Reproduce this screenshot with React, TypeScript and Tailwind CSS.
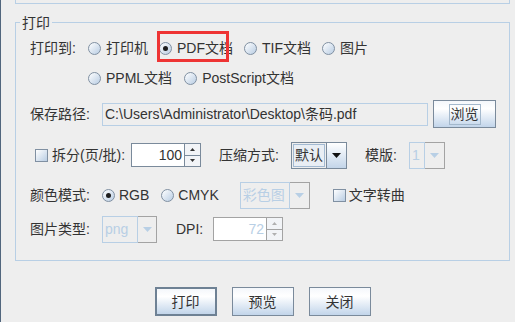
import React from "react";

function Radio({ checked }: { checked?: boolean }) {
  return (
    <span className="flex h-[13px] w-[13px] shrink-0 items-center justify-center rounded-full border border-[#8090a2] bg-linear-to-br from-white to-[#b9cde3]">
      {checked && <span className="h-[5px] w-[5px] rounded-full bg-[#1e1e1e]" />}
    </span>
  );
}

function Check() {
  return (
    <span className="h-[13px] w-[13px] shrink-0 border border-[#8090a2] bg-linear-to-br from-white to-[#b9cde3]" />
  );
}

function Option({ label, checked, gap = "gap-[5px]" }: { label: string; checked?: boolean; gap?: string }) {
  return (
    <span className={`flex items-center ${gap}`}>
      <Radio checked={checked} />
      <span>{label}</span>
    </span>
  );
}

function Triangle({ color }: { color: string }) {
  return (
    <svg width="9" height="5" viewBox="0 0 9 5">
      <path d="M0 0h9L4.5 5z" fill={color} />
    </svg>
  );
}

function Combo({ text, width, arrow = 20, disabled }: { text: string; width: string; arrow?: number; disabled?: boolean }) {
  if (disabled) {
    return (
      <div className={`flex h-[27px] ${width}`}>
        <div className="flex flex-1 items-center border border-[#b8cfe5] pl-[2px] text-[#b8cfe5]">{text}</div>
        <div
          className="flex items-center justify-center border border-l-0 border-[#a3a3a3]"
          style={{ width: arrow }}
        >
          <Triangle color="#b8cfe5" />
        </div>
      </div>
    );
  }
  return (
    <div className={`flex h-[27px] border border-[#7a8a9b] ${width}`}>
      <div className="flex min-w-0 flex-1 items-center p-[1px]">
        <span className="flex h-full w-full items-center border border-[#a3bad2] bg-[#e9eef4] pl-[1px]">{text}</span>
      </div>
      <div
        className="flex shrink-0 items-center justify-center border-l border-[#7a8a9b] bg-linear-to-b from-white to-[#c3d5e9]"
        style={{ width: arrow }}
      >
        <Triangle color="#111" />
      </div>
    </div>
  );
}

function Spinner({ value, disabled }: { value: string; disabled?: boolean }) {
  const border = disabled ? "border-[#a3a3a3]" : "border-[#7a8a9b]";
  const arrow = disabled ? "#b0b0b0" : "#333";
  return (
    <div className={`flex h-[24px] w-[70px] border ${border}`}>
      <div className={`flex flex-1 items-center justify-end bg-white pr-[2px] ${disabled ? "text-[#b8cfe5]" : "text-[#333]"}`}>
        {value}
      </div>
      <div className={`flex w-[16px] flex-col border-l ${border}`}>
        <div className={`flex flex-1 items-center justify-center border-b ${border} bg-[#f2f4f7]`}>
          <svg width="5" height="3" viewBox="0 0 5 3"><path d="M0 3h5L2.5 0z" fill={arrow} /></svg>
        </div>
        <div className="flex flex-1 items-center justify-center bg-[#f2f4f7]">
          <svg width="5" height="3" viewBox="0 0 5 3"><path d="M0 0h5L2.5 3z" fill={arrow} /></svg>
        </div>
      </div>
    </div>
  );
}

function Button({ label, main, focus, className = "" }: { label: string; main?: boolean; focus?: boolean; className?: string }) {
  return (
    <button
      className={`flex items-center justify-center bg-linear-to-b from-[#f4f7fb] via-white via-30% to-[#c2d5ea] text-[#333] ${
        main ? "border-2 border-[#6e8194]" : "border border-[#7a8a9b]"
      } ${className}`}
    >
      <span className={focus ? "border border-[#a3b8cc] px-[1px] leading-[19px]" : ""}>{label}</span>
    </button>
  );
}

export default function App() {
  return (
    <div className="h-[322px] w-[515px] overflow-hidden whitespace-nowrap border-l border-[#51667d] bg-[#eeeeee] font-['Liberation_Sans','Noto_Sans_CJK_SC',sans-serif] text-[14px] leading-[16px] text-[#333]">
      <div className="ml-[14px] h-[4px] w-[495px] border-x border-b border-[#b8cfe5]" />

      {/* 打印 group */}
      <div className="relative ml-[14px] mt-[18px] h-[239px] w-[495px] border border-[#b8cfe5]">
        <span className="absolute left-[4px] top-[-8px] bg-[#eeeeee] px-[2px]">打印</span>
        <span className="absolute left-[141px] top-[8px] h-[31px] w-[72px] border-[3px] border-[#ee3434]" />

        <div className="mt-[10px] flex h-[30px] items-center pl-[14px]">
          <span className="w-[58px]">打印到:</span>
          <div className="flex gap-[11px]">
            <Option label="打印机" />
            <Option label="PDF文档" checked />
            <Option label="TIF文档" />
            <Option label="图片" />
          </div>
        </div>

        <div className="flex h-[30px] items-center gap-[12px] pl-[72px]">
          <Option label="PPML文档" />
          <Option label="PostScript文档" />
        </div>

        <div className="mt-[6px] flex h-[30px] items-center pl-[14px]">
          <span className="w-[72px]">保存路径:</span>
          <div className="flex h-[23px] w-[326px] items-center border border-[#b8cfe5] pl-[2px]">
            C:\Users\Administrator\Desktop\条码.pdf
          </div>
          <Button label="浏览" focus className="ml-[5px] h-[28px] w-[63px]" />
        </div>

        <div className="mt-[11px] flex h-[30px] items-center pl-[19px]">
          <span className="flex w-[96px] items-center gap-[4px]">
            <Check />
            <span>拆分(页/批):</span>
          </span>
          <Spinner value="100" />
          <span className="ml-[18px] w-[72px]">压缩方式:</span>
          <Combo text="默认" width="w-[56px]" />
          <span className="ml-[18px] w-[44px]">模版:</span>
          <Combo text="1" width="w-[36px]" disabled />
        </div>

        <div className="mt-[10px] flex h-[30px] items-center pl-[14px]">
          <span className="w-[72px]">颜色模式:</span>
          <Option label="RGB" checked gap="gap-[4px]" />
          <span className="ml-[12px]">
            <Option label="CMYK" gap="gap-[4px]" />
          </span>
          <span className="ml-[21px]">
            <Combo text="彩色图" width="w-[70px]" disabled />
          </span>
          <span className="ml-[23px] flex items-center gap-[3px]">
            <Check />
            <span>文字转曲</span>
          </span>
        </div>

        <div className="mt-[4px] flex h-[30px] items-center pl-[14px]">
          <span className="w-[72px]">图片类型:</span>
          <Combo text="png" width="w-[55px]" arrow={19} disabled />
          <span className="ml-[19px] w-[37px]">DPI:</span>
          <Spinner value="72" disabled />
        </div>
      </div>

      <div className="ml-[14px] mt-[26px] flex w-[495px] justify-center gap-[15px]">
        <Button label="打印" main className="h-[29px] w-[62px]" />
        <Button label="预览" className="h-[29px] w-[62px]" />
        <Button label="关闭" className="h-[29px] w-[62px]" />
      </div>
    </div>
  );
}
